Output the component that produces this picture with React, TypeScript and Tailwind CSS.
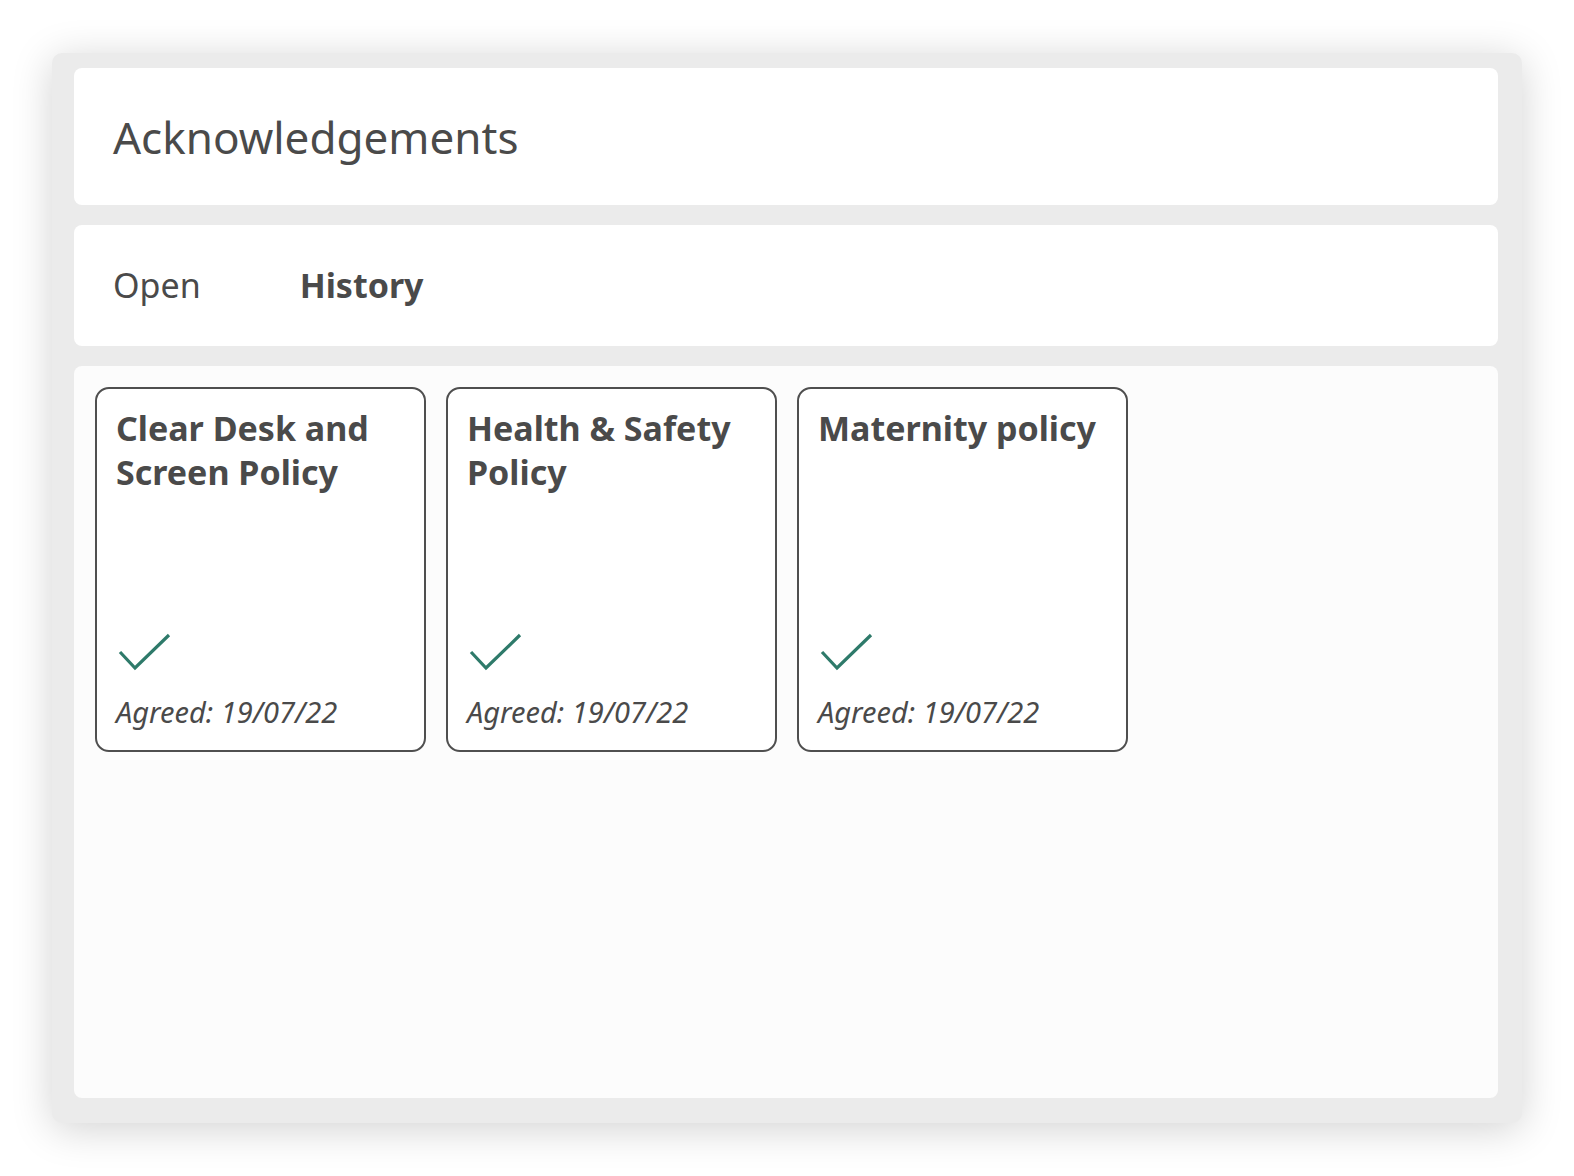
import React from "react";

const policies = [
  { title: "Clear Desk and Screen Policy", agreed: "19/07/22" },
  { title: "Health & Safety Policy", agreed: "19/07/22" },
  { title: "Maternity policy", agreed: "19/07/22" },
];

function Check() {
  return (
    <svg width="54" height="40" viewBox="0 0 54 40" fill="none">
      <path d="M2 20 L17 36 L51 3" stroke="#2e7a6a" strokeWidth="3.2" />
    </svg>
  );
}

function PolicyCard({ title, agreed }: { title: string; agreed: string }) {
  return (
    <div className="w-[331px] h-[365px] rounded-[14px] border-2 border-[#4f4f4f] bg-white flex flex-col px-[19px] pt-[17px] pb-[21px]">
      <h3 className="text-[34px] leading-[44px] font-bold text-[#4a4a4a]">{title}</h3>
      <div className="mt-auto">
        <div className="ml-[2px] mb-[23px]">
          <Check />
        </div>
        <p className="text-[29px] leading-[34px] italic text-[#4a4a4a]">Agreed: {agreed}</p>
      </div>
    </div>
  );
}

export default function App() {
  return (
    <div
      className="min-h-screen bg-white pl-[52px] pt-[53px]"
      style={{ fontFamily: '"Noto Sans", "Open Sans", sans-serif' }}
    >
      <div className="w-[1470px] h-[1070px] rounded-[10px] bg-[#ebebeb] shadow-[0_6px_40px_rgba(0,0,0,0.18)] flex flex-col gap-[20px] pt-[15px] pl-[22px] pr-[24px] pb-[25px]">
        <div className="h-[137px] shrink-0 rounded-[8px] bg-white flex items-center pl-[39px]">
          <h1 className="text-[44px] font-normal text-[#4a4a4a]">Acknowledgements</h1>
        </div>
        <div className="h-[121px] shrink-0 rounded-[8px] bg-white flex items-center pl-[39px] gap-[99px]">
          <button className="text-[34px] font-normal text-[#4a4a4a]">Open</button>
          <button className="text-[34px] font-bold text-[#4a4a4a]">History</button>
        </div>
        <div className="flex-1 rounded-[8px] bg-[#fcfcfc] p-[21px]">
          <div className="flex gap-[20px]">
            {policies.map((p) => (
              <PolicyCard key={p.title} title={p.title} agreed={p.agreed} />
            ))}
          </div>
        </div>
      </div>
    </div>
  );
}
